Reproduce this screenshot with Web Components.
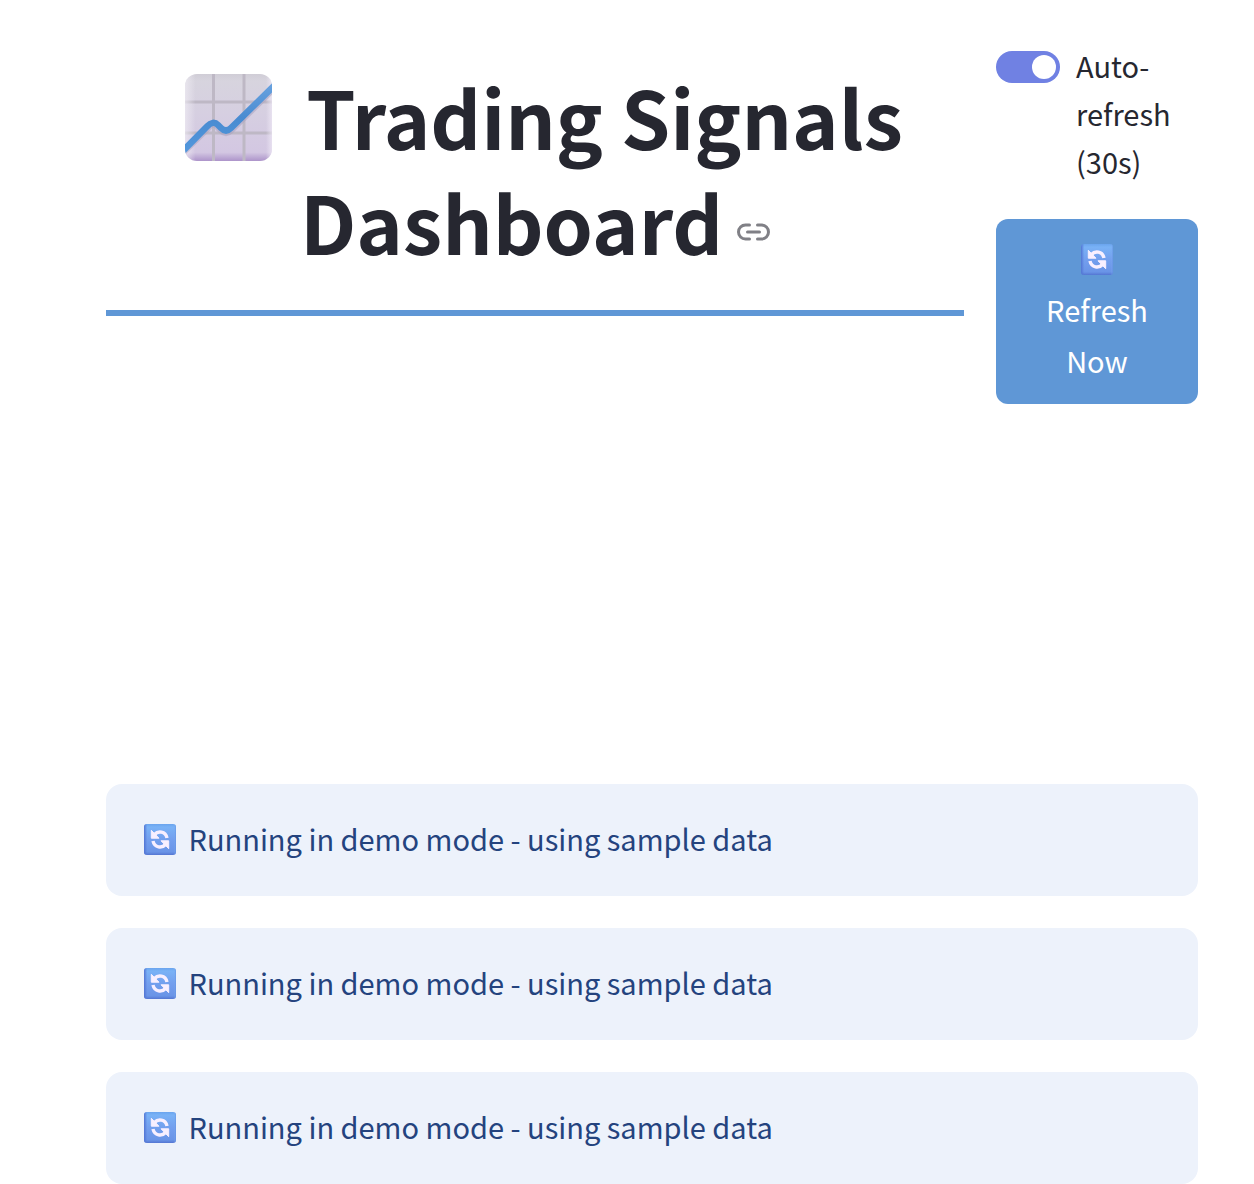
<!DOCTYPE html>
<html lang="en">
<head>
<meta charset="utf-8">
<meta name="viewport" content="width=device-width, initial-scale=1">
<title>Trading Signals Dashboard</title>
<style>
  body {
    margin: 0;
    background: #fff;
    color: #262730;
    font-family: "Noto Sans CJK SC", "Noto Sans", sans-serif;
    font-size: 29px;
    line-height: 48px;
  }
</style>
</head>
<body>
<trading-dashboard></trading-dashboard>

<template id="chart-icon">
  <style>
    :host { display: inline-block; width: 88px; height: 88px; line-height: 0; vertical-align: -12px; margin: 0 15px 0 18px; }
    svg { width: 100%; height: 100%; }
  </style>
  <svg viewBox="0 0 88 88" role="img" aria-label="Chart increasing">
    <defs>
      <linearGradient id="base" x1="0" y1="0" x2="0" y2="1">
        <stop offset="0" stop-color="#d0cdd6"/><stop offset=".08" stop-color="#d7d4de"/><stop offset=".45" stop-color="#d6cfe1"/><stop offset=".9" stop-color="#d3c7e2"/><stop offset="1" stop-color="#ad94ca"/>
      </linearGradient>
      <linearGradient id="left" x1="0" y1="0" x2="1" y2="0">
        <stop offset="0" stop-color="#f0edf4" stop-opacity=".7"/><stop offset=".12" stop-color="#f0edf4" stop-opacity="0"/><stop offset=".93" stop-color="#eee8f5" stop-opacity="0"/><stop offset="1" stop-color="#eee8f5" stop-opacity=".75"/>
      </linearGradient>
      <linearGradient id="line" x1="0" y1="0" x2="0" y2="1">
        <stop offset="0" stop-color="#68a2df"/><stop offset=".5" stop-color="#498bd1"/><stop offset="1" stop-color="#5297dc"/>
      </linearGradient>
      <clipPath id="tile"><rect width="87" height="87" rx="12"/></clipPath>
    </defs>
    <g clip-path="url(#tile)">
      <rect width="87" height="87" fill="url(#base)"/>
      <path d="M28.500 0V87M59 0V87M0 28H87M0 59H87" stroke="#beb8c5" stroke-width="3" fill="none"/>
      <rect width="87" height="87" fill="url(#left)"/>
      <path d="M-3 79L23 53.500Q28 47.500 33 53L36 56Q41 61 46 56L91 12" stroke="#aca2bf" stroke-opacity=".55" stroke-width="7" fill="none"/>
      <path d="M-3 78L22 52.500Q28 46 33 51L36 54Q41 59 46 54L91 10" stroke="url(#line)" stroke-width="6.500" stroke-linejoin="round" fill="none"/>
    </g>
  </svg>
</template>

<template id="refresh-icon">
  <style>
    :host { display: inline-block; width: 32px; height: 32px; line-height: 0; vertical-align: -5px; margin: 0 6px; }
    svg { width: 100%; height: 100%; }
  </style>
  <svg viewBox="0 0 32 32" aria-hidden="true">
    <defs>
      <linearGradient id="face" x1="0" y1="0" x2="0" y2="1">
        <stop offset="0" stop-color="#6aa4ee"/><stop offset=".1" stop-color="#79b2f6"/><stop offset=".5" stop-color="#739fee"/><stop offset=".9" stop-color="#6a94e7"/><stop offset="1" stop-color="#5476d2"/>
      </linearGradient>
      <linearGradient id="edge" x1="0" y1="0" x2="1" y2="0">
        <stop offset="0" stop-color="#5275d4"/><stop offset=".1" stop-color="#5275d4" stop-opacity="0"/><stop offset=".93" stop-color="#86b6f2" stop-opacity="0"/><stop offset="1" stop-color="#5d8de0" stop-opacity=".7"/>
      </linearGradient>
    </defs>
    <rect width="32" height="31" rx="3" fill="url(#face)"/>
    <rect width="32" height="31" rx="3" fill="url(#edge)"/>
    <g id="arrow">
      <path d="M10.500 10.500C14 6.600 21.500 7 23 14" fill="none" stroke="#f8efff" stroke-width="3.400"/>
      <path d="M7.300 6.300V14.200H15Z" fill="#f8efff" stroke="#f8efff" stroke-linejoin="round"/>
    </g>
    <use href="#arrow" transform="rotate(180 16 15.500)"/>
  </svg>
</template>

<template id="page-title">
  <style>
    :host { display: block; border-bottom: 6px solid #5f97d6; padding: 22px 0 37px; }
    h1 { margin: 0; font-size: 79px; line-height: 105px; font-weight: 700; text-align: center; }
    a { display: inline-block; width: 33px; height: 18px; margin-left: 14px; line-height: 0; vertical-align: 14px; color: #808086; }
    svg { width: 100%; height: 100%; }
  </style>
  <h1 id="title"><slot></slot><a href="#title" aria-label="Link to heading"><svg viewBox="0 0 33 18" fill="none" stroke="currentColor" stroke-width="3" stroke-linecap="round"><path d="M12.500 2H8.500a7 7 0 0 0 0 14h4M20.500 2h4a7 7 0 0 1 0 14h-4M10.500 9h12"/></svg></a></h1>
</template>

<template id="toggle-switch">
  <style>
    :host { display: block; }
    label { display: flex; gap: 16px; align-items: flex-start; cursor: pointer; }
    input {
      appearance: none; flex: none; box-sizing: border-box; display: flex; justify-content: flex-start;
      width: 64px; height: 32px; margin: 10px 0; padding: 4px; border-radius: 16px; background: #c5c8d2; cursor: pointer;
    }
    input:checked { justify-content: flex-end; background: #7081e3; }
    input::before { content: ""; width: 24px; height: 24px; border-radius: 50%; background: #fff; }
    span { min-width: 0; }
  </style>
  <label><input type="checkbox" role="switch" checked><span><slot></slot></span></label>
</template>

<template id="action-button">
  <style>
    :host { display: block; }
    button {
      width: 100%; padding: 14px 32px 18px; border: 0; border-radius: 12px; background: #5f97d6; color: #fff;
      font: inherit; line-height: 51px; text-align: center; cursor: pointer;
    }
    button:hover { background: #4f89ca; }
  </style>
  <button type="button"><slot></slot></button>
</template>

<template id="info-alert">
  <style>
    :host { display: block; padding: 30px 32px 34px; border-radius: 16px; background: #edf2fb; color: #24437e; }
  </style>
  <div role="status"><slot></slot></div>
</template>

<template id="trading-dashboard">
  <style>
    :host { display: block; padding: 41px 56px 0 106px; }
    main { display: flex; flex-direction: column; gap: 32px; }
    header { display: grid; grid-template-columns: minmax(0, 1fr) 202px; gap: 32px; align-items: start; }
    .controls { display: flex; flex-direction: column; gap: 34px; }
    .stage { min-height: 316px; }
  </style>
  <main>
    <header>
      <page-title><chart-icon></chart-icon> Trading Signals Dashboard</page-title>
      <div class="controls">
        <toggle-switch>Auto-refresh (30s)</toggle-switch>
        <action-button><refresh-icon></refresh-icon> Refresh Now</action-button>
      </div>
    </header>
    <div class="stage"></div>
    <info-alert><refresh-icon></refresh-icon> Running in demo mode - using sample data</info-alert>
    <info-alert><refresh-icon></refresh-icon> Running in demo mode - using sample data</info-alert>
    <info-alert><refresh-icon></refresh-icon> Running in demo mode - using sample data</info-alert>
  </main>
</template>

<script>
  class TemplateElement extends HTMLElement {
    constructor() {
      super();
      const template = document.getElementById(this.localName);
      this.attachShadow({ mode: "open" }).append(template.content.cloneNode(true));
    }
  }
  for (const name of ["chart-icon", "refresh-icon", "page-title", "toggle-switch", "action-button", "info-alert", "trading-dashboard"]) {
    customElements.define(name, class extends TemplateElement {});
  }
</script>
</body>
</html>
